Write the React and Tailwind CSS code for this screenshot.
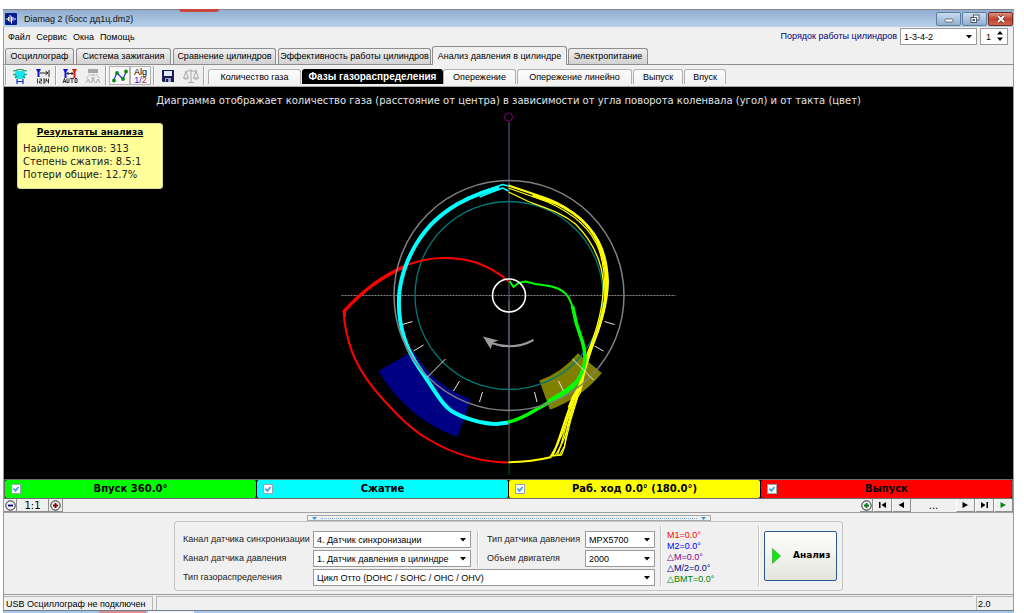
import { useState } from 'react'
import clsx from 'clsx'

const MAIN_TABS = [
  { name: 'Осциллограф', width: 'w-[69px]' },
  { name: 'Система зажигания', width: 'w-[95px]' },
  { name: 'Сравнение цилиндров', width: 'w-[103px]' },
  { name: 'Эффективность работы цилиндров', width: 'w-[153px]' },
  { name: 'Анализ давления в цилиндре', width: 'w-[135px]' },
  { name: 'Электропитание', width: 'w-[80px]' },
]

const VIEW_TABS = [
  { name: 'Количество газа', width: 'w-[93px]' },
  { name: 'Фазы газораспределения', width: 'w-[141px]' },
  { name: 'Опережение', width: 'w-[73px]' },
  { name: 'Опережение линейно', width: 'w-[115px]' },
  { name: 'Выпуск', width: 'w-[50px]' },
  { name: 'Впуск', width: 'w-[42px]' },
]

const STROKES = [
  { name: 'Впуск 360.0°', color: 'bg-[#00ff00]' },
  { name: 'Сжатие', color: 'bg-[#00ffff]' },
  { name: 'Раб. ход 0.0° (180.0°)', color: 'bg-[#ffff00]' },
  { name: 'Выпуск', color: 'bg-[#ff0000]' },
]

const MARKS = [
  { text: 'M1=0.0°', color: 'text-[#ff0000]' },
  { text: 'M2=0.0°', color: 'text-[#0000ff]' },
  { text: '△M=0.0°', color: 'text-[#800080]' },
  { text: '△M/2=0.0°', color: 'text-[#000080]' },
  { text: '△BMT=0.0°', color: 'text-[#008000]' },
]

function TitleBar() {
  const button = 'flex h-[14px] w-[25px] items-center justify-center rounded-[2px] border border-[#5f7d9e] bg-linear-to-b from-[#c9dbee] to-[#93b0cf]'
  return (
    <header className="relative flex h-[18px] items-center justify-between border-t border-[#84888c] bg-linear-to-b from-[#91aecf] to-[#b8d1ea] pl-[2px] pr-px">
      {/* edge of the window behind */}
      <span className="absolute -top-px left-[176px] h-[3px] w-10 rounded-b-sm bg-[#c8473c]" />
      <div className="flex items-center gap-[7px]">
        <svg width="12" height="12" viewBox="0 0 12 12">
          <rect width="12" height="12" rx="1" fill="#0b1c8c" />
          <path d="M1 6h2M3.500 4v4M5 2v7M6.500 3.500v7M8 4v4M9 6h2" fill="none" stroke="#fff" strokeWidth="1" />
        </svg>
        <h1 className="text-[9px] leading-[14px] text-[#111]">Diamag 2 (босс дд1ц.dm2)</h1>
      </div>
      <div className="flex gap-px">
        <button aria-label="Свернуть" className={button}>
          <svg width="10" height="10" viewBox="0 0 10 10"><rect x="1" y="5" width="8" height="3" rx="1" fill="#fff" stroke="#4b5563" strokeWidth=".8" /></svg>
        </button>
        <button aria-label="Восстановить" className={button}>
          <svg width="10" height="10" viewBox="0 0 10 10" fill="#fff" stroke="#3f4b5b" strokeWidth=".9">
            <rect x="3.500" y="1" width="5.500" height="5" />
            <rect x="1" y="3.500" width="5.500" height="5" />
            <rect x="3" y="5.500" width="1.500" height="1" />
          </svg>
        </button>
        <button aria-label="Закрыть" className="flex h-[14px] w-[25px] items-center justify-center rounded-[2px] border border-[#6b2a22] bg-linear-to-b from-[#dd9082] via-[#c4402c] to-[#cf6450]">
          <svg width="10" height="10" viewBox="0 0 10 10">
            <path d="M2 2l6 6M8 2L2 8" stroke="#5c2a28" strokeWidth="3.400" />
            <path d="M2 2l6 6M8 2L2 8" stroke="#fff" strokeWidth="2" />
          </svg>
        </button>
      </div>
    </header>
  )
}

function Select({ id, value, className }) {
  return (
    <span className={clsx('relative inline-flex', className)}>
      <select id={id} className="h-[17px] w-full appearance-none border border-[#9a9a9a] bg-white pl-[3px] pr-4 text-[9px] leading-[14px] whitespace-pre text-black outline-none">
        <option>{value}</option>
      </select>
      <svg className="pointer-events-none absolute top-[7px] right-[5px]" width="6" height="4" viewBox="0 0 6 4">
        <path d="M0 0h6L3 3.500z" fill="#000" />
      </svg>
    </span>
  )
}

function MenuBar() {
  return (
    <div className="flex h-[20px] justify-between pl-1 pr-[5px]">
      <nav className="flex items-center gap-[6px] text-[9px] leading-[14px] text-black">
        {['Файл', 'Сервис', 'Окна', 'Помощь'].map(item => (
          <button key={item}>{item}</button>
        ))}
      </nav>
      <div className="flex items-start gap-[3px] pt-px">
        <label htmlFor="order" className="pt-px text-[9px] leading-[14px] text-[#000080]">Порядок работы цилиндров</label>
        <Select id="order" value="1-3-4-2" className="w-[77px]" />
        <span className="relative inline-flex">
          <input
            type="number"
            aria-label="Номер цилиндра"
            defaultValue="1"
            className="h-[17px] w-7 [appearance:textfield] border border-[#9a9a9a] bg-white pl-[5px] text-[9px] leading-[14px] outline-none [&::-webkit-inner-spin-button]:appearance-none"
          />
          <svg className="pointer-events-none absolute top-[3px] right-[5px]" width="6" height="10" viewBox="0 0 6 10">
            <path d="M0 3.500L3 0l3 3.500zM0 6.500h6L3 10z" fill="#000" />
          </svg>
        </span>
      </div>
    </div>
  )
}

function MainTabs({ active, onSelect }) {
  return (
    <div role="tablist" className="flex h-[18px] items-end gap-[2px] border-b border-[#8e8e8e] pl-px">
      {MAIN_TABS.map(({ name, width }) => (
        <button
          key={name}
          role="tab"
          aria-selected={name === active}
          onClick={() => onSelect(name)}
          className={clsx(
            width,
            'shrink-0 rounded-t-[3px] border border-b-0 border-[#8e8e8e] text-center text-[9px] whitespace-nowrap',
            name === active
              ? '-mx-px -mb-px h-[19px] bg-[#f0f0f0] leading-[17px]'
              : 'h-4 bg-linear-to-b from-[#f0f0f0] to-[#d2d2d2] leading-[15px]',
          )}
        >
          {name}
        </button>
      ))}
    </div>
  )
}

function Separator() {
  return <span className="h-[19px] w-[2px] border-l border-[#a5a5a5] bg-white" />
}

function Toolbar() {
  const button = 'flex h-[19px] w-[21px] items-center justify-center'
  const pressed = 'border border-[#b4b4b4] bg-[#f8f8f8]'
  return (
    <div className="flex items-center gap-[2px]">
      <Separator />
      <button aria-label="Фазы" className={button}>
        <svg width="16" height="16" viewBox="0 0 16 16" fill="none">
          <path d="M4 3h8l2 4-3 4H5L2 7z" fill="#18e4ee" />
          <path d="M1 3q3 0 5-1.500h4Q12 3 15 3M1 6l3 1M15 6l-3 1M3 10l2-2M13 10l-2-2" stroke="#2c9562" strokeWidth="1.200" />
          <path d="M5 11v5M11 11v5M5 13.500h6" stroke="#0b2fd8" strokeWidth="1.200" />
        </svg>
      </button>
      <button aria-label="Нумерация" className={button}>
        <svg width="16" height="16" viewBox="0 0 16 16" fill="none">
          <path d="M1 1h5L4.500 4v5h-2V4z" fill="#1414d8" />
          <path d="M5 5h8M10.500 3l2.500 2-2.500 2M14 2v7" stroke="#222" />
          <path d="M2.500 10.500v5M4.500 11h2v2h-2v2h2.500M8 11h2v4H8M8 13h2M11.500 10.500V13h2.500M13.500 10.500v5" stroke="#222" strokeWidth=".9" />
        </svg>
      </button>
      <Separator />
      <button aria-label="Авто" className={button}>
        <svg width="16" height="16" viewBox="0 0 16 16" fill="none">
          <path d="M1 1h5L4.500 4v6h-2V4z" fill="#1414d8" />
          <path d="M10 1h5l-1.500 3v6h-2V4z" fill="#e01818" />
          <path d="M5 5.500h6M6.500 4L5 5.500 6.500 7M9.500 4L11 5.500 9.500 7" stroke="#222" />
          <path d="M1 15l1.500-4.500L4 15M1.500 13.500h2M5 10.500v4h2v-4M8 10.500h4M10 10.500V15M13 10.500h2v4h-2z" stroke="#222" strokeWidth=".9" />
        </svg>
      </button>
      <button aria-label="Форсунка" className={button} disabled>
        <svg width="16" height="16" viewBox="0 0 16 16" fill="none">
          <path d="M3 1h10v4H3z" fill="#a6a6a6" />
          <path d="M5 6l-4 5M7 6v5M9 6v5M11 6l4 5" stroke="#a6a6a6" strokeDasharray="2 1" />
          <path d="M1 15l2-4 2 4M6 15l2-4 2 4M11 15l2-4 2 4" stroke="#a6a6a6" />
        </svg>
      </button>
      <Separator />
      <div className="flex">
        <button aria-label="График" className={clsx(button, pressed)}>
          <svg width="16" height="14" viewBox="0 0 16 14">
            <path d="M1.500 11.500L5 4l6 6 3.500-8" fill="none" stroke="#1531d0" strokeWidth="1.100" />
            <g fill="#0a8b14">
              <circle cx="2" cy="11.500" r="1.900" /><circle cx="5" cy="4" r="1.900" />
              <circle cx="11" cy="10" r="1.900" /><circle cx="14" cy="2.500" r="1.900" />
            </g>
          </svg>
        </button>
        <button aria-label="Алгоритм" className={clsx(button, pressed, 'flex-col text-[9px] leading-[8px]')}>
          <span>Alg</span>
          <span className="text-[#2020d0]">1/<span className="text-[#e01818]">2</span></span>
        </button>
      </div>
      <Separator />
      <button aria-label="Сохранить" className={button}>
        <svg width="12" height="12" viewBox="0 0 12 12">
          <path d="M0 0h12v12H1L0 11z" fill="#1c1c50" />
          <path d="M2 1h8v5H2z" fill="#dfe8f5" />
          <path d="M3 8h6v4H3z" fill="#9aa3c8" />
          <path d="M4 9h2v3H4z" fill="#1c1c50" />
        </svg>
      </button>
      <button aria-label="Весы" className={button} disabled>
        <svg width="16" height="16" viewBox="0 0 16 16" fill="none" stroke="#a9a9a9">
          <path d="M8 1v13M5 14.500h6M2 4q3-2 6-1 3 1 6-1M3 4L.5 10h5zM13 3l-2.500 7h5zM.5 10q2.500 3 5 0M10.500 10q2.500 3 5 0" />
        </svg>
      </button>
      <Separator />
    </div>
  )
}

function ViewTabs({ active, onSelect }) {
  return (
    <div role="tablist" className="flex items-end gap-px self-end pb-[2px]">
      {VIEW_TABS.map(({ name, width }) => (
        <button
          key={name}
          role="tab"
          aria-selected={name === active}
          onClick={() => onSelect(name)}
          className={clsx(
            width,
            'h-[15px] shrink-0 rounded-t-[3px] text-center leading-[15px] whitespace-nowrap',
            name === active
              ? '-mr-px bg-black text-[10px] font-bold text-white'
              : 'border border-b-0 border-[#b0b0b0] bg-linear-to-b from-[#fcfcfc] to-[#f2f2f2] text-[9px]',
          )}
        >
          {name}
        </button>
      ))}
    </div>
  )
}

function PhaseDiagram() {
  return (
    <svg className="absolute inset-0 h-full w-full" viewBox="5 87 1008 392" fill="none">
      {/* sectors of valve timing */}
      <path d="M413.700 351A110 110 0 0 0 471.400 399.400L457.700 437A150 150 0 0 1 379 371z" fill="#000084" />
      <path d="M578.400 353.200A90 90 0 0 1 539.800 380.600L550.400 409.700A121 121 0 0 0 602.400 373z" fill="#808000" />

      {/* axes */}
      <path d="M342 295.500H676" stroke="#8c8c8c" strokeDasharray="2 1" />
      <path d="M509.500 122V410" stroke="#62628a" />
      <path d="M509.500 300V460" stroke="#6e646e" />
      <path d="M509.500 460V475" stroke="#006400" />
      <circle cx="509" cy="117" r="4" stroke="#800080" />

      <circle cx="509.500" cy="295.500" r="94" stroke="#007878" strokeWidth="1.300" />

      {/* exhaust */}
      <g stroke="#ff0000" strokeLinejoin="round">
        <path strokeWidth="2" d="M509 281.500C502 275 491 268 478 263C466 259 454 258 443 258C428 258 414 262 400 268C374 281 359 295 344 311L345 322C347 335 350 347 356 360C364 377 373 388 385 401C398 415 412 430 430 440C452 453 478 462 509 462.500" />
        <path strokeWidth="3" d="M407 266C376 280 361 294 345 311L345 317" />
      </g>

      {/* expansion */}
      <g stroke="#ffff00" strokeLinejoin="round">
        <path strokeWidth="2" d="M509 462.300C524 462 540 460 552 457" />
        <path strokeWidth="2" d="M509 185.500L540 196C553 200 563 205 572 212C586 222 594 231 599 241C606 254 608 266 608.500 282C608 304 600 330 590 353C584 374 580 388 572 403C565 420 561 437 553 456" />
        <path strokeWidth="2.500" d="M533 195L558 204C579 214 594 228 601 249C606 264 608 283 606 299C603 322 594 342 588 356" />
        <path strokeWidth="1.300" d="M509 188L548 202C578 215 593 231 600 251C605 267 606 282 605 300C600 331 589 356 583 380L576 401C570 419 567 439 556 455" />
        <path strokeWidth="1.300" d="M509 192L530 202C552 210 564 214 576 224C592 240 602 259 604 283C604 308 598 329 588 353L581 384L572 405C566 424 563 439 551 456L562 455L565 447L568 426L573 407L581 392L583 373" />
        <path strokeWidth="1.200" d="M574 397L565 422L558 445L553 453M578 395L568 420L562 443L558 455M578 398L571 421L565 446L560 455" />
        <path strokeWidth="4" d="M585 365L581 386L574 398L570 408" />
      </g>

      {/* compression */}
      <g stroke="#00ffff" strokeLinejoin="round">
        <path strokeWidth="4" d="M500 188C487 190 473 196 458 204C440 215 429 225 418 242C408 258 402 275 400 291C397 322 405 346 419 367C433 387 441 403 452 411C463 418 483 424 497 424L509 422.500" />
        <path strokeWidth="1.600" d="M509 186L503 184.500L485 191L462 203M509 191L503 188L480 197" />
        <path strokeWidth="1.500" d="M469 197L446 212C430 224 420 236 412 251" />
      </g>

      {/* intake */}
      <g stroke="#00ff00" strokeLinejoin="round">
        <path strokeWidth="2" d="M510 281L514 287L519 283L526 281.500L536 284L550 286C564 289 569 295 572 304L576 321L583 341" />
        <path strokeWidth="3.500" d="M573 306L577 324L583 342C587 357 587 366 577 383C570 392 560 396 550 402L536 410C526 416 519 420 509 422" />
        <path strokeWidth="3" d="M580 378C571 390 559 394 549 401" />
      </g>

      <circle cx="509.500" cy="295.500" r="115" stroke="#808080" strokeWidth="1.500" />
      <circle cx="509.500" cy="295.500" r="16.500" stroke="#fff" strokeWidth="1.600" />

      {/* angle ticks */}
      <path stroke="#e8e8e8" d="M403 324.500L413 321.500M414 351L424 345M428 377L446 359M454 391L460 381M480 402L483 392M605 321.500L615 324.500M595 346L604 351M573 359L594 380M559 381L564 391M535 392L537.500 402" />

      {/* rotation direction */}
      <path stroke="#9a9a9e" strokeWidth="2" d="M534 340Q514 351 492 343" />
      <path fill="#9a9a9e" d="M483.500 336.500L499 340.500L493.500 342.500L491 349z" />
    </svg>
  )
}

function Results() {
  return (
    <section className="relative ml-[13px] mt-[15px] w-[146px] rounded-[3px] border border-[#d8d890] bg-[#ffff99] px-[5px] pt-[2px] pb-[7px] font-['DejaVu_Sans'] text-[10px] leading-[13px] text-[#222]">
      <h2 className="mb-[3px] text-center text-[9px] font-bold text-black underline">Результаты анализа</h2>
      <p>Найдено пиков: 313</p>
      <p>Степень сжатия: 8.5:1</p>
      <p>Потери общие: 12.7%</p>
    </section>
  )
}

function StrokeLegend() {
  return (
    <div className="grid h-5 grid-cols-4 gap-px border border-[#6c6c6c] bg-black">
      {STROKES.map(({ name, color }) => (
        <label key={name} className={clsx('relative flex items-center justify-center rounded-[2px] font-["DejaVu_Sans"] text-[10px] font-bold leading-[14px] text-black', color)}>
          <input type="checkbox" defaultChecked className="peer absolute left-[6px] size-[10px] appearance-none border border-[#9aa4ae] bg-white" />
          <svg className="pointer-events-none absolute left-[6px] hidden peer-checked:block" width="10" height="10" viewBox="0 0 10 10">
            <path d="M2.500 4.500l2 2.500L7.500 3" fill="none" stroke="#3a94e8" strokeWidth="1.600" />
          </svg>
          {name}
        </label>
      ))}
    </div>
  )
}

function Magnifier({ plus, color }) {
  return (
    <svg width="11" height="11" viewBox="0 0 11 11" fill="none">
      <circle cx="5.500" cy="5.500" r="4.700" stroke="#222" />
      <path d={plus ? 'M3 5.500h5M5.500 3v5' : 'M3 5.500h5'} stroke={color} strokeWidth="1.800" />
    </svg>
  )
}

function ZoomBar() {
  const cell = 'flex h-[13px] items-center justify-center border-r border-b border-[#8e8e8e]'
  const NAV = [
    { label: 'В начало', d: 'M1 1v6h1.500V1zM8 1v6L3.500 4z', fill: '#000' },
    { label: 'Назад', d: 'M7 1v6L1.500 4z', fill: '#000' },
  ]
  const NAV_NEXT = [
    { label: 'Вперёд', d: 'M1.500 1v6L7 4z', fill: '#000' },
    { label: 'В конец', d: 'M1 1v6l4.500-3zM6.500 1v6H8V1z', fill: '#000' },
    { label: 'Пуск', d: 'M1.500 1v6L7 4z', fill: '#0b8a1c' },
  ]
  const renderNav = ({ label, d, fill }) => (
    <button key={label} aria-label={label} className={clsx(cell, 'w-[19px] border-l border-l-white')}>
      <svg width="9" height="8" viewBox="0 0 9 8"><path d={d} fill={fill} /></svg>
    </button>
  )
  return (
    <div className="flex h-[14px] justify-between border-b border-[#a0a0a0]">
      <div className="flex">
        <button aria-label="Уменьшить" className={clsx(cell, 'w-[13px]')}><Magnifier color="#000080" /></button>
        <button className={clsx(cell, 'w-8 font-["DejaVu_Sans"] text-[10px] leading-[13px]')}>1:1</button>
        <button aria-label="Увеличить" className={clsx(cell, 'w-[14px]')}><Magnifier plus color="#8b0000" /></button>
      </div>
      <div className="flex">
        <button aria-label="Масштаб" className={clsx(cell, 'w-[13px]')}><Magnifier plus color="#0b7a14" /></button>
        {NAV.map(renderNav)}
        <span className="flex w-[45px] justify-center font-['DejaVu_Sans'] text-[10px] leading-[13px]">...</span>
        {NAV_NEXT.map(renderNav)}
      </div>
    </div>
  )
}

function SettingsPanel() {
  const label = 'text-[9px] leading-[17px] whitespace-nowrap text-[#222]'
  return (
    <div className="flex flex-col items-center pt-[2px] pb-[3px]">
      <button aria-label="Свернуть панель" className="flex h-[6px] w-[404px] items-center justify-between border border-[#a8a8a8] bg-[#f0f0f0] px-1">
        <svg width="5" height="3" viewBox="0 0 5 3"><path d="M0 0h5L2.500 3z" fill="#3a94e8" /></svg>
        <span className="mx-1 flex-1 border-t border-dotted border-[#7fb2e4]" />
        <svg width="5" height="3" viewBox="0 0 5 3"><path d="M0 0h5L2.500 3z" fill="#3a94e8" /></svg>
      </button>
      <form className="flex min-h-[70px] rounded-[3px] border border-[#c4c4c4] pt-1 pr-[5px] pl-2" onSubmit={e => e.preventDefault()}>
        <div className="grid grid-cols-[130px_158px_16px_98px_70px] content-start items-center gap-y-[2px] pt-[5px]">
          <label htmlFor="sync" className={label}>Канал датчика синхронизации</label>
          <Select id="sync" value="4.  Датчик синхронизации" />
          <span className="row-span-2 ml-[6px] h-9 w-[2px] border-l border-[#c4c4c4] bg-white" />
          <label htmlFor="sensor" className={label}>Тип датчика давления</label>
          <Select id="sensor" value="MPX5700" />
          <label htmlFor="pressure" className={label}>Канал датчика давления</label>
          <Select id="pressure" value="1.  Датчик давления в цилиндре" />
          <label htmlFor="volume" className={label}>Объем двигателя</label>
          <Select id="volume" value="2000" />
          <label htmlFor="timing" className={label}>Тип газораспределения</label>
          <Select id="timing" value="Цикл Отто (DOHC / SOHC / OHC / OHV)" className="col-span-4" />
        </div>
        <span className="mx-[5px] h-[60px] w-[2px] border-l border-[#c4c4c4] bg-white" />
        <ul className="w-[91px] pt-1 text-[9px] leading-[11px]">
          {MARKS.map(({ text, color }) => (
            <li key={text} className={color}>{text}</li>
          ))}
        </ul>
        <span className="mr-1 h-[60px] w-[2px] border-l border-[#c4c4c4] bg-white" />
        <button type="submit" className="mt-[5px] flex h-[50px] w-[73px] items-center gap-3 rounded-[2px] border border-[#2c5a8c] bg-linear-to-b from-white to-[#e4e5dc] pl-[7px] font-['DejaVu_Sans'] text-[9px] font-bold text-black">
          <svg width="9" height="16" viewBox="0 0 9 16"><path d="M.5.500L8.500 8l-8 7.500z" fill="#00f000" stroke="#4a9a4a" strokeWidth=".7" /></svg>
          Анализ
        </button>
      </form>
    </div>
  )
}

export default function App() {
  const [tab, setTab] = useState('Анализ давления в цилиндре')
  const [view, setView] = useState('Фазы газораспределения')

  return (
    <div className="flex min-h-screen flex-col bg-white pt-[9px] pr-[10px] pl-[3px] font-['Liberation_Sans',sans-serif] text-black">
      <TitleBar />
      <div className="flex flex-1 flex-col border-x border-[#9a9a9a] bg-[#f0f0f0]">
        <MenuBar />
        <MainTabs active={tab} onSelect={setTab} />

        <div className="flex h-[22px] gap-[3px] border-b border-[#a8a8a8] pl-px">
          <Toolbar />
          <ViewTabs active={view} onSelect={setView} />
        </div>

        {/* Diagram */}
        <main className="relative min-h-[392px] flex-1 bg-black">
          <PhaseDiagram />
          <p className="relative pt-[6px] text-center font-['DejaVu_Sans'] text-[10px] leading-[15px] text-[#e4e4e4]">
            Диаграмма отображает количество газа (расстояние от центра) в зависимости от угла поворота коленвала (угол) и от такта (цвет)
          </p>
          <Results />
        </main>

        <StrokeLegend />
        <ZoomBar />
        <SettingsPanel />

        {/* Status bar */}
        <footer className="flex h-4 gap-[3px] border-t border-[#9a9a9a] pt-px text-[9px] leading-[14px]">
          <span className="w-[149px] border-t border-r border-[#b4b4b4] pl-[2px] whitespace-nowrap">USB Осциллограф не подключен</span>
          <span className="flex-1 border-t border-l border-[#b4b4b4]" />
          <span className="w-[37px] border-t border-l border-[#b4b4b4] pl-px">2.0</span>
        </footer>
      </div>

      {/* Taskbar edge */}
      <div className="flex h-[3px] border-t border-[#6d7f92] bg-[#a9c6e6] pl-[96px]">
        <span className="mr-[2px] w-[47px] bg-[#d98c88]" />
        <span className="w-[46px] bg-[#f2f6fb]" />
      </div>
    </div>
  )
}
